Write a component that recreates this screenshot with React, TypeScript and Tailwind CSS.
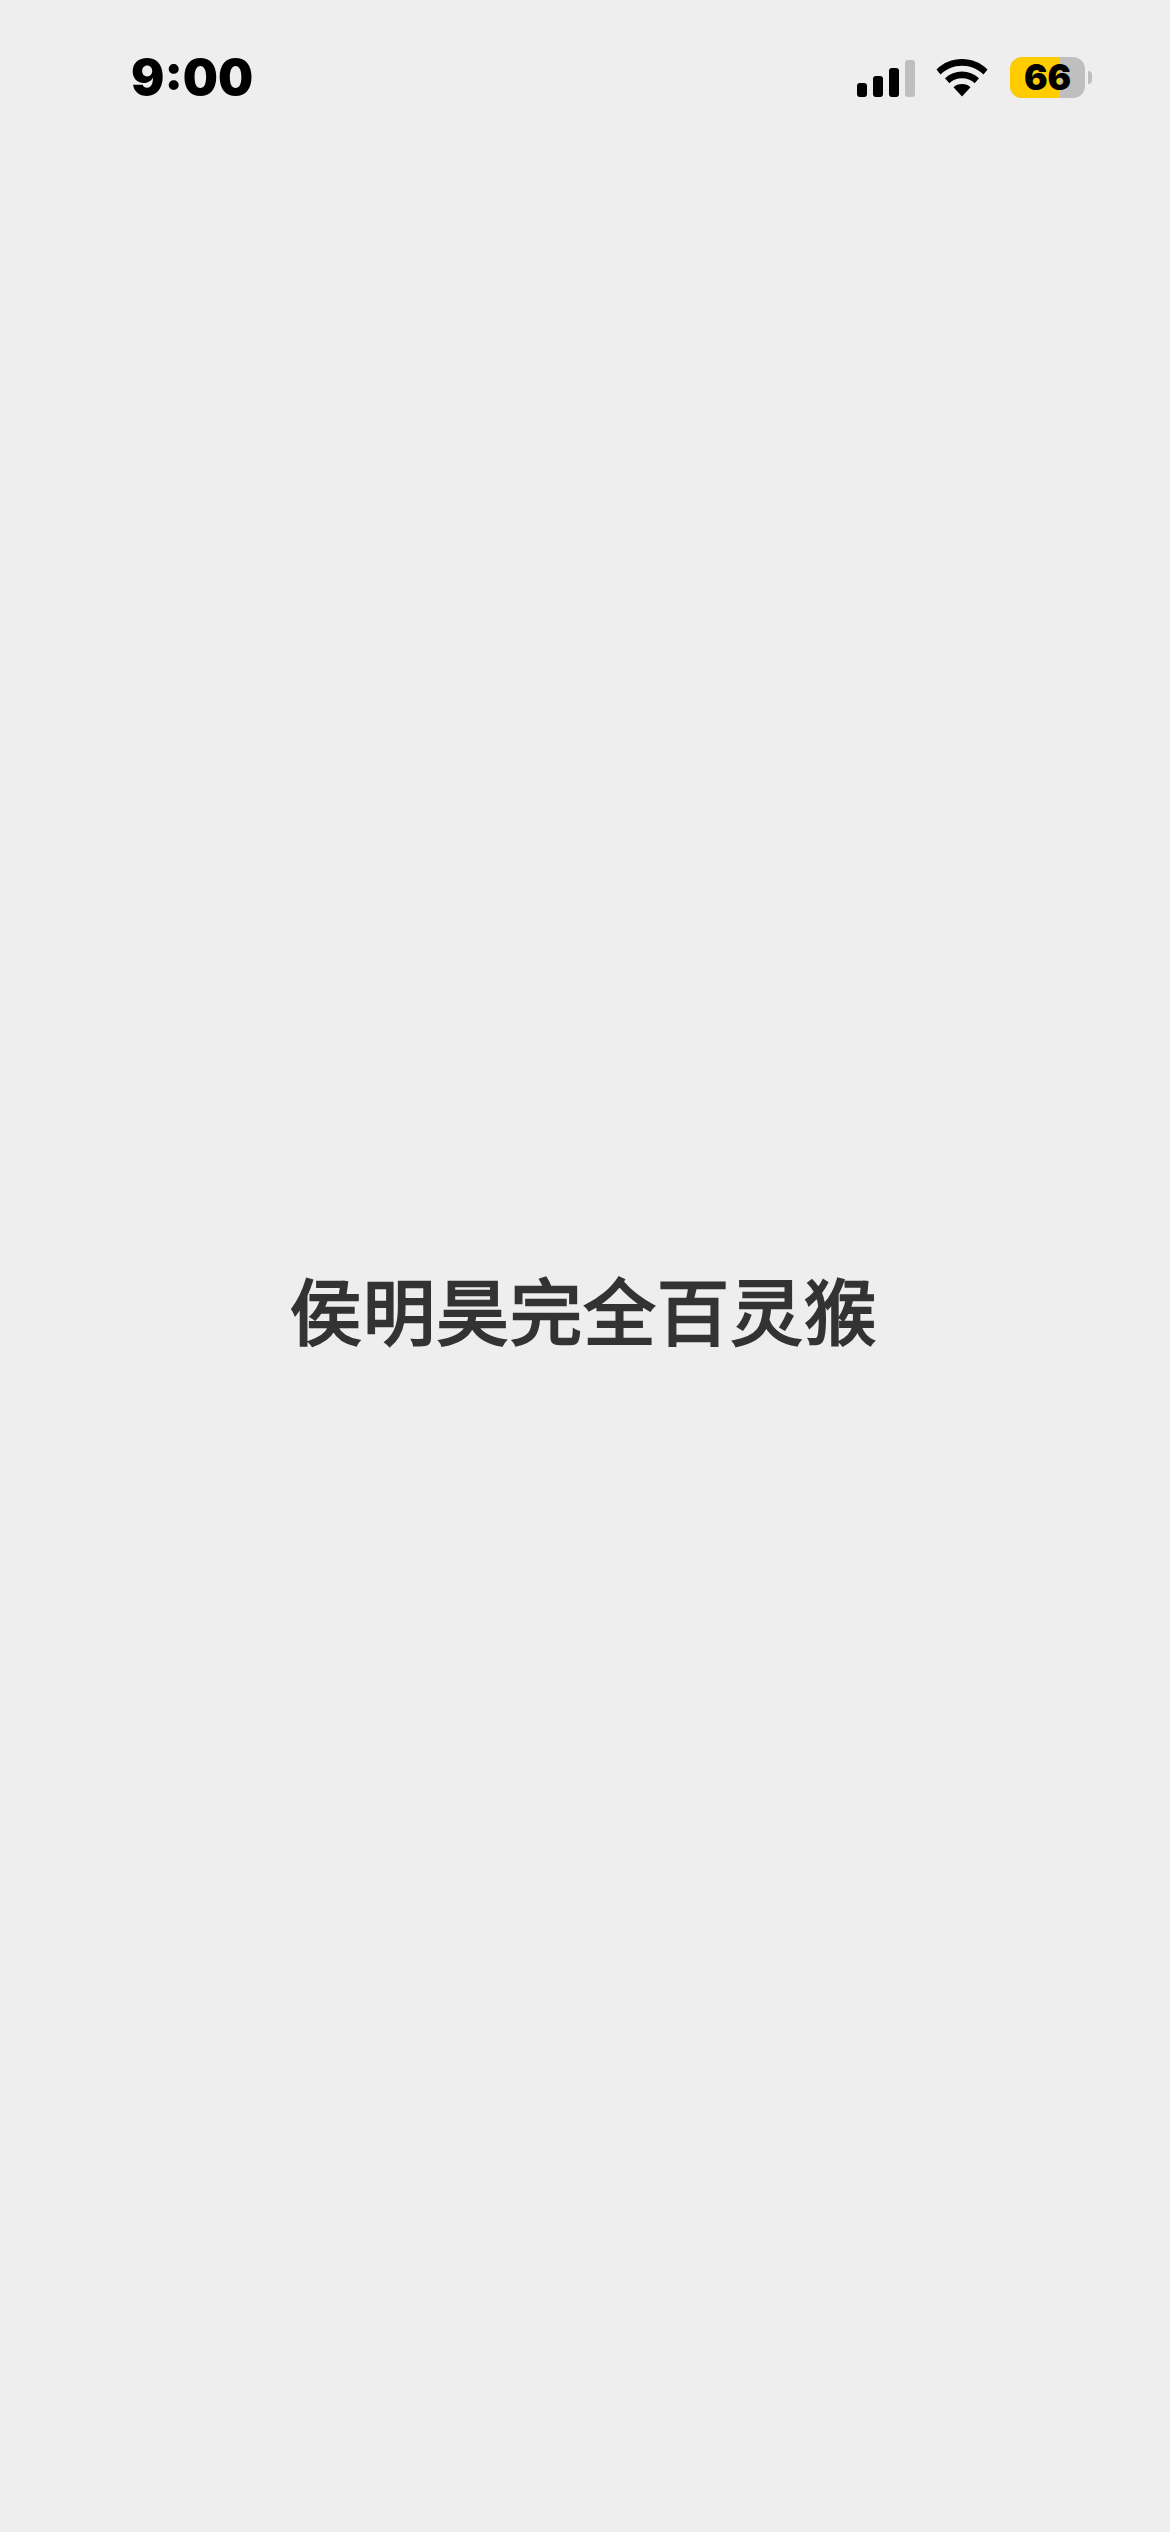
export default function App() {
  return (
    <div className="flex h-[2532px] w-[1170px] flex-col items-center overflow-hidden bg-[#eeeeee]">
      <div className="flex h-[155px] w-full items-start justify-between pl-[131px] pr-[78px] pt-[46px]">
        <span className="text-[49.500px] leading-[63px] font-black text-black" style={{ fontFamily: "Inter, sans-serif" }}>9:00</span>
        <div className="mt-[11px] flex items-center">
          <svg width="60" height="40" viewBox="0 0 60 40" className="block">
            <rect x="0" y="25" width="10" height="14" rx="3" fill="#000" />
            <rect x="16" y="18" width="10" height="21" rx="3" fill="#000" />
            <rect x="32" y="10" width="10" height="29" rx="3" fill="#000" />
            <rect x="48" y="2" width="10" height="37" rx="3" fill="#bfbfbf" />
          </svg>
          <svg width="52" height="38" viewBox="0 0 52 38" className="ml-[19px] block">
            <path d="M26 0C16 0 7.500 3.500 0.500 10.500L4.500 15.500C10.500 9.800 17.700 6.800 26 6.800C34.300 6.800 41.500 9.800 47.500 15.500L51.500 10.500C44.500 3.500 36 0 26 0Z" fill="#000" />
            <path d="M26 12.500C19.500 12.500 14 14.700 9 19.200L13.300 24.200C16.800 21 21 19.300 26 19.300C31 19.300 35.200 21 38.700 24.200L43 19.200C38 14.700 32.500 12.500 26 12.500Z" fill="#000" />
            <path d="M26 25C22.500 25 19.700 26 17.500 28.200L26 37.500L34.500 28.200C32.300 26 29.500 25 26 25Z" fill="#000" />
          </svg>
          <div className="ml-[22px] flex items-center">
            <div className="relative h-[41px] w-[75px] rounded-[12px] bg-[#bfbfbf]">
              <div className="h-full w-[50px] rounded-l-[12px] bg-[#ffcc00]" />
              <span className="absolute inset-0 flex items-center justify-center text-[35px] leading-none font-black text-black" style={{ fontFamily: "Inter, sans-serif" }}>66</span>
            </div>
            <div className="ml-[3px] h-[13px] w-[4px] rounded-r-[4px] bg-[#bfbfbf]" />
          </div>
        </div>
      </div>
      <div className="mt-[1108px] mr-[3px] text-center text-[72px] leading-[90px] font-normal tracking-[1.500px] [-webkit-text-stroke:2.400px_#333333] whitespace-nowrap text-[#333333]" style={{ fontFamily: '"Noto Sans CJK SC", sans-serif' }}>
        侯明昊完全百灵猴
      </div>
    </div>
  );
}
